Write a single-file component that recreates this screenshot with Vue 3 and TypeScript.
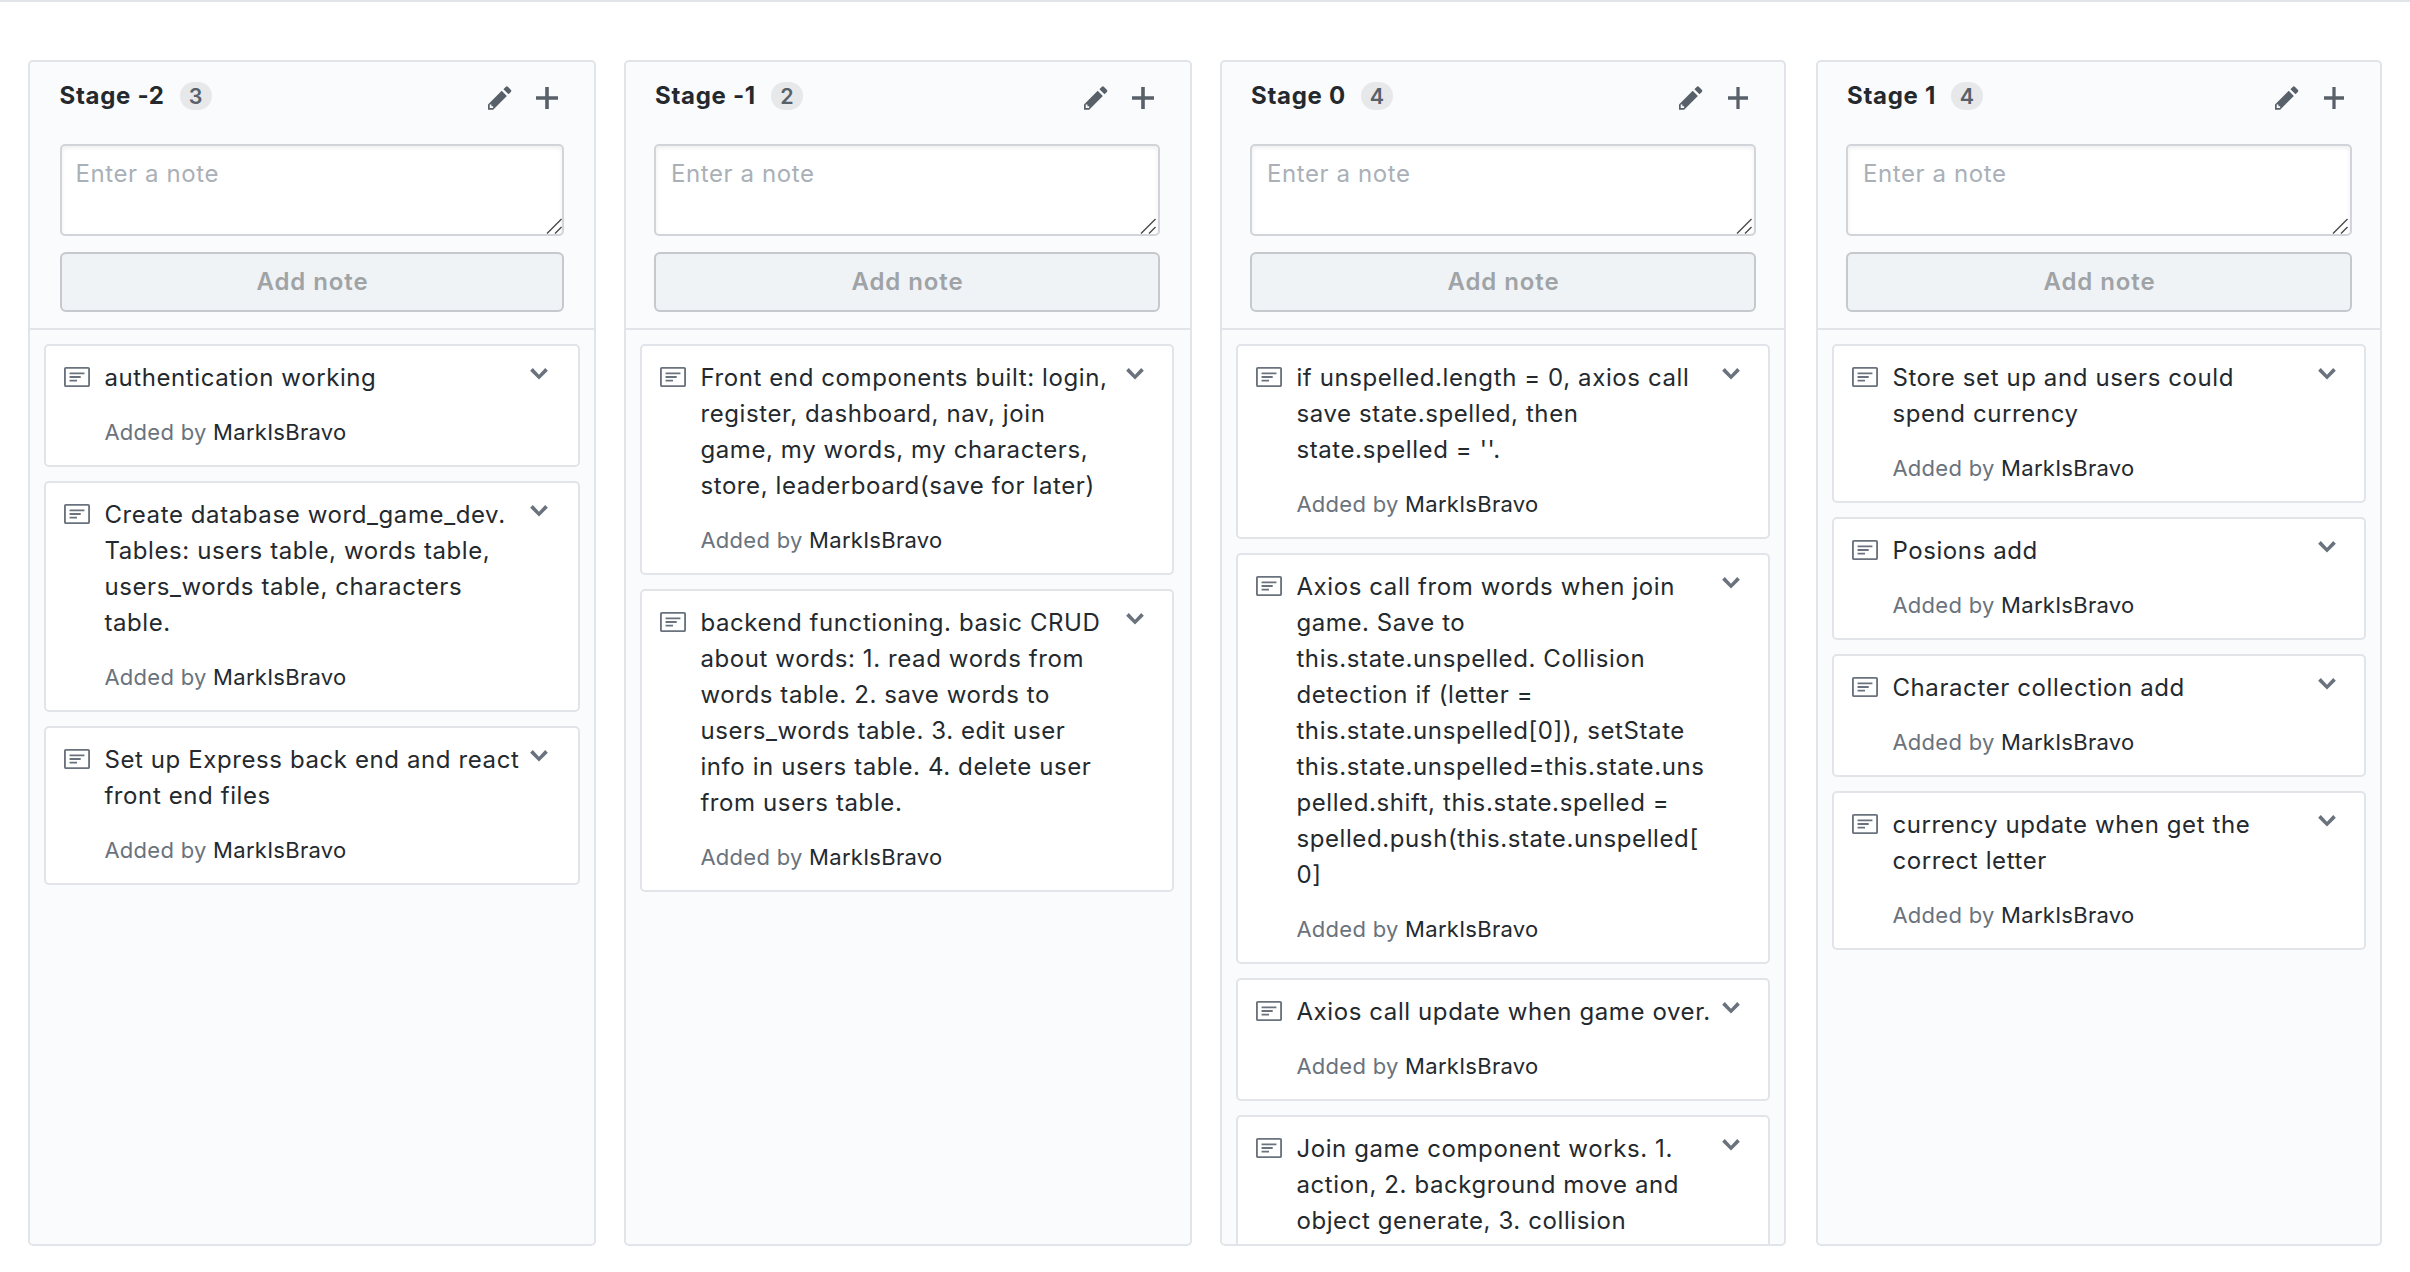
<script setup lang="ts">
interface Note {
  text: string
  author?: string
}

interface Column {
  name: string
  cards: Note[]
}

const author = 'MarkIsBravo'

const columns: Column[] = [
  {
    name: 'Stage -2',
    cards: [
      { text: 'authentication working', author },
      {
        text: 'Create database word_game_dev.\nTables: users table, words table,\nusers_words table, characters\ntable.',
        author,
      },
      { text: 'Set up Express back end and react\nfront end files', author },
    ],
  },
  {
    name: 'Stage -1',
    cards: [
      {
        text: 'Front end components built: login,\nregister, dashboard, nav, join\ngame, my words, my characters,\nstore, leaderboard(save for later)',
        author,
      },
      {
        text: 'backend functioning. basic CRUD\nabout words: 1. read words from\nwords table. 2. save words to\nusers_words table. 3. edit user\ninfo in users table. 4. delete user\nfrom users table.',
        author,
      },
    ],
  },
  {
    name: 'Stage 0',
    cards: [
      { text: "if unspelled.length = 0, axios call\nsave state.spelled, then\nstate.spelled = ''.", author },
      {
        text: 'Axios call from words when join\ngame. Save to\nthis.state.unspelled. Collision\ndetection if (letter =\nthis.state.unspelled[0]), setState\nthis.state.unspelled=this.state.uns\npelled.shift, this.state.spelled =\nspelled.push(this.state.unspelled[\n0]',
        author,
      },
      { text: 'Axios call update when game over.', author },
      { text: 'Join game component works. 1.\naction, 2. background move and\nobject generate, 3. collision' },
    ],
  },
  {
    name: 'Stage 1',
    cards: [
      { text: 'Store set up and users could\nspend currency', author },
      { text: 'Posions add', author },
      { text: 'Character collection add', author },
      { text: 'currency update when get the\ncorrect letter', author },
    ],
  },
]
</script>

<template>
  <main class="board">
    <section v-for="col in columns" :key="col.name" class="column">
      <header class="head">
        <div class="title-row">
          <h3 class="title">{{ col.name }}</h3>
          <span class="count">{{ col.cards.length }}</span>
          <svg class="pencil" viewBox="0 0 14 16" aria-label="Edit column">
            <path fill-rule="evenodd" d="M0 12v3h3l8-8-3-3-8 8zm3 2H1v-2h1v1h1v1zm10.3-9.3L12 6 9 3l1.3-1.3a.996.996 0 0 1 1.41 0l1.59 1.59c.39.39.39 1.02 0 1.41z" />
          </svg>
          <svg class="plus" viewBox="0 0 22 22" preserveAspectRatio="none" aria-label="Add a note">
            <path d="M9.2 0h3.6v9.2H22v3.6h-9.2V22H9.2v-9.2H0V9.2h9.2z" />
          </svg>
        </div>
        <div class="note-input">
          <span>Enter a note</span>
          <svg class="grip" viewBox="0 0 16 16"><path d="M1 15.5L15.5 1M9 15.5L15.5 9" /></svg>
        </div>
        <button class="add" disabled>Add note</button>
      </header>
      <div class="cards">
        <article v-for="card in col.cards" :key="card.text" class="card">
          <svg class="note" viewBox="0 2 14 11" preserveAspectRatio="none">
            <path fill-rule="evenodd" d="M3 10h4V9H3v1zm0-2h6V7H3v1zm0-2h8V5H3v1zm10 6H1V3h12v9zM1 2c-.55 0-1 .45-1 1v9c0 .55.45 1 1 1h12c.55 0 1-.45 1-1V3c0-.55-.45-1-1-1H1z" />
          </svg>
          <div class="body">
            <p class="text">{{ card.text }}</p>
            <p v-if="card.author" class="by">Added by <a>{{ card.author }}</a></p>
          </div>
          <svg class="chevron" viewBox="0 0 10 6.5"><path d="M5 6.5L0 1.5 1.5 0 5 3.75 8.5 0 10 1.5z" /></svg>
        </article>
      </div>
    </section>
  </main>
</template>

<style>
body {
  margin: 0;
  background: #fff;
}
</style>

<style scoped>
.board {
  box-sizing: border-box;
  height: 1272px;
  overflow: hidden;
  border-top: 2px solid #e1e4e8;
  padding: 58px 0 26px 28px;
  display: grid;
  grid-template-columns: repeat(4, 596px);
  grid-template-rows: 1186px;
  font-family: Inter, "Liberation Sans", sans-serif;
  font-size: 24px;
  letter-spacing: 0.6px;
  color: #24292e;
}
.column {
  box-sizing: border-box;
  width: 568px;
  border: 2px solid #e1e4e8;
  border-radius: 5px;
  background: #fafbfc;
  overflow: hidden;
  display: flex;
  flex-direction: column;
}
.column:nth-child(n + 3) {
  width: 566px;
}
.head {
  flex: none;
  box-sizing: border-box;
  height: 268px;
  padding: 0 28px;
  border-bottom: 2px solid #e1e4e8;
}
.column:first-child .head {
  padding: 0 30px;
}
.column:nth-child(2) .head {
  padding-right: 30px;
}
.title-row {
  display: flex;
  align-items: flex-start;
  height: 82px;
}
.title {
  margin: 16px 15px 0 1px;
  font-size: 24px;
  line-height: 36px;
  font-weight: 700;
  letter-spacing: 0.7px;
}
.column:first-child .title {
  margin-left: -0.5px;
}
.count {
  margin-top: 20px;
  width: 32px;
  height: 28px;
  line-height: 28px;
  border-radius: 14px;
  background: #e7e8ea;
  color: #586069;
  font-size: 21.5px;
  font-weight: 600;
  letter-spacing: 0;
  text-align: center;
}
.pencil {
  width: 24px;
  height: 27.4px;
  margin: 22px 24px 0 auto;
  fill: #586069;
}
.plus {
  width: 22px;
  height: 22px;
  margin: 25px 6px 0 0;
  fill: #586069;
}
.column:nth-child(n + 3) .pencil {
  margin-right: 25px;
}
.column:nth-child(n + 3) .plus {
  width: 20px;
  margin-right: 8px;
}
.note-input {
  box-sizing: border-box;
  position: relative;
  height: 92px;
  border: 2px solid #d1d5da;
  border-radius: 5px;
  background: #fff;
  box-shadow: inset 0 2px 4px rgba(27, 31, 35, 0.075);
  padding: 10px 15px;
  line-height: 36px;
  color: #aab0b7;
}
.column:first-child .note-input {
  padding-left: 13.4px;
}
.grip {
  position: absolute;
  right: 0;
  bottom: 0;
  width: 16px;
  height: 16px;
  fill: none;
  stroke: #4a4a4a;
  stroke-width: 1.4;
}
.column:nth-child(n + 2) .grip {
  right: 2px;
}
.add {
  display: block;
  box-sizing: border-box;
  width: 100%;
  height: 60px;
  margin: 16px 0 0;
  padding: 0 0 2px 1px;
  border: 2px solid #c5c9cd;
  border-radius: 6px;
  background: #eff3f6;
  color: #9fa3a6;
  font: 600 24px Inter, "Liberation Sans", sans-serif;
  letter-spacing: 0.9px;
}
.cards {
  flex: 1;
  min-height: 0;
  overflow: hidden;
  padding: 14px 14px 0;
}
.column:nth-child(2) .cards {
  padding-right: 16px;
}
.card {
  box-sizing: border-box;
  display: flex;
  align-items: flex-start;
  margin-bottom: 14px;
  padding: 14px 28px 15px 18px;
  border: 2px solid #e1e4e8;
  border-radius: 5px;
  background: #fff;
}
.column:first-child .card {
  padding-right: 30px;
}
.note {
  flex: none;
  width: 26px;
  height: 20px;
  margin: 7px 14.4px 0 0;
  fill: #6a737d;
}
.body {
  flex: 1;
  min-width: 0;
}
.text,
.by {
  margin: 0;
  line-height: 36px;
  white-space: pre;
}
.by {
  margin-top: 18px;
  font-size: 22px;
  letter-spacing: 0.28px;
  color: #6a737d;
}
.by a {
  color: #24292e;
}
.chevron {
  flex: none;
  width: 18px;
  height: 11.5px;
  margin-top: 8px;
  fill: #6a737d;
}
</style>
